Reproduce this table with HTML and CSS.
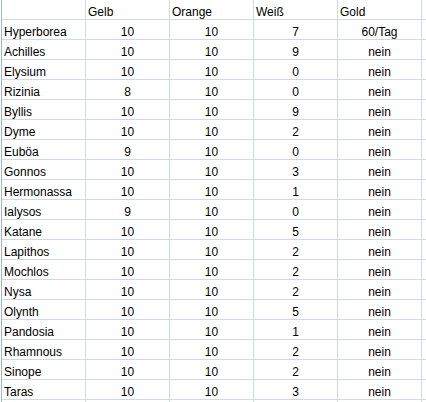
FILE: index.html
```html
<!DOCTYPE html>
<html lang="de">
<head>
<meta charset="utf-8">
<title>Tabelle</title>
<link rel="stylesheet" href="styles.css">
</head>
<body>
<div class="sheet">
  <div class="c"></div><div class="c h">Gelb</div><div class="c h">Orange</div><div class="c h">Weiß</div><div class="c h">Gold</div><div class="c"></div>
  <div class="c">Hyperborea</div><div class="c n">10</div><div class="c n">10</div><div class="c n">7</div><div class="c n">60/Tag</div><div class="c"></div>
  <div class="c">Achilles</div><div class="c n">10</div><div class="c n">10</div><div class="c n">9</div><div class="c n">nein</div><div class="c"></div>
  <div class="c">Elysium</div><div class="c n">10</div><div class="c n">10</div><div class="c n">0</div><div class="c n">nein</div><div class="c"></div>
  <div class="c">Rizinia</div><div class="c n">8</div><div class="c n">10</div><div class="c n">0</div><div class="c n">nein</div><div class="c"></div>
  <div class="c">Byllis</div><div class="c n">10</div><div class="c n">10</div><div class="c n">9</div><div class="c n">nein</div><div class="c"></div>
  <div class="c">Dyme</div><div class="c n">10</div><div class="c n">10</div><div class="c n">2</div><div class="c n">nein</div><div class="c"></div>
  <div class="c">Euböa</div><div class="c n">9</div><div class="c n">10</div><div class="c n">0</div><div class="c n">nein</div><div class="c"></div>
  <div class="c">Gonnos</div><div class="c n">10</div><div class="c n">10</div><div class="c n">3</div><div class="c n">nein</div><div class="c"></div>
  <div class="c">Hermonassa</div><div class="c n">10</div><div class="c n">10</div><div class="c n">1</div><div class="c n">nein</div><div class="c"></div>
  <div class="c">Ialysos</div><div class="c n">9</div><div class="c n">10</div><div class="c n">0</div><div class="c n">nein</div><div class="c"></div>
  <div class="c">Katane</div><div class="c n">10</div><div class="c n">10</div><div class="c n">5</div><div class="c n">nein</div><div class="c"></div>
  <div class="c">Lapithos</div><div class="c n">10</div><div class="c n">10</div><div class="c n">2</div><div class="c n">nein</div><div class="c"></div>
  <div class="c">Mochlos</div><div class="c n">10</div><div class="c n">10</div><div class="c n">2</div><div class="c n">nein</div><div class="c"></div>
  <div class="c">Nysa</div><div class="c n">10</div><div class="c n">10</div><div class="c n">2</div><div class="c n">nein</div><div class="c"></div>
  <div class="c">Olynth</div><div class="c n">10</div><div class="c n">10</div><div class="c n">5</div><div class="c n">nein</div><div class="c"></div>
  <div class="c">Pandosia</div><div class="c n">10</div><div class="c n">10</div><div class="c n">1</div><div class="c n">nein</div><div class="c"></div>
  <div class="c">Rhamnous</div><div class="c n">10</div><div class="c n">10</div><div class="c n">2</div><div class="c n">nein</div><div class="c"></div>
  <div class="c">Sinope</div><div class="c n">10</div><div class="c n">10</div><div class="c n">2</div><div class="c n">nein</div><div class="c"></div>
  <div class="c">Taras</div><div class="c n">10</div><div class="c n">10</div><div class="c n">3</div><div class="c n">nein</div><div class="c"></div>
  <div class="c"></div><div class="c"></div><div class="c"></div><div class="c"></div><div class="c"></div><div class="c"></div>
</div>
</body>
</html>
```
FILE: styles.css
```css
html, body {
  margin: 0;
  padding: 0;
  background: #ffffff;
  height: 402px;
  overflow: hidden;
}

.sheet {
  margin-left: 1px;
  border-left: 1px solid #9eb6ce;
  display: grid;
  grid-template-columns: 83px 83px 83px 83px 83px 1fr;
  grid-auto-rows: 19px;
  gap: 1px;
  background: #d0d7e5;
  font-family: "Liberation Sans", Arial, sans-serif;
  font-size: 12px;
  color: #000000;
}

.c {
  background: #ffffff;
  box-sizing: border-box;
  height: 19px;
  padding: 5px 2px 0 2px;
  line-height: 14px;
  white-space: nowrap;
  overflow: hidden;
}

.n {
  text-align: center;
}

.h {
  text-align: left;
}
```
